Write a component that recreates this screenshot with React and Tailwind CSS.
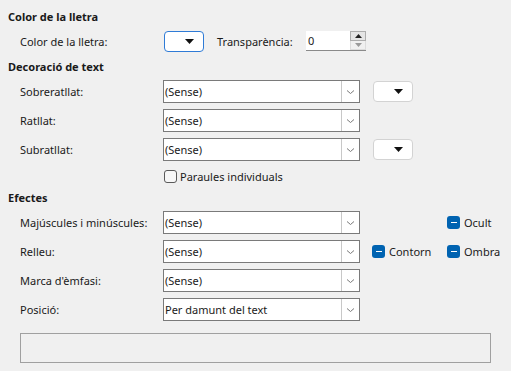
import React from 'react';

const font = { fontFamily: '"Noto Sans", "Open Sans", sans-serif' };

function Select({ value }) {
    return (
        <div className="flex h-[23px] w-[197px] shrink-0 border border-[#7a7a7a] bg-white">
            <div className="flex flex-1 items-center pl-[1px] text-[11px] leading-none text-[#1a1a1a]">{value}</div>
            <div className="flex w-[18px] items-center justify-center border-l border-[#c8c8c8] bg-white">
                <svg width="9" height="6" viewBox="0 0 9 6">
                    <path d="M1 1.5 L4.5 4.5 L8 1.5" fill="none" stroke="#7a7a7a" strokeWidth="1" />
                </svg>
            </div>
        </div>
    );
}

function ColorButton({ active }) {
    return (
        <div
            className={
                'flex h-[21px] w-[40px] shrink-0 items-center justify-end rounded-[4px] border bg-white pr-[9px] ' +
                (active ? 'border-[#2f7bd6]' : 'border-[#d3d3d3]')
            }
        >
            <svg width="9" height="5" viewBox="0 0 9 5">
                <path d="M0 0 H9 L4.5 5 Z" fill="#111" />
            </svg>
        </div>
    );
}

function Check({ label }) {
    return (
        <div className="flex items-center gap-[4px]">
            <div className="flex h-[13px] w-[13px] items-center justify-center rounded-[3px] bg-[#0063b1]">
                <div className="h-[1.5px] w-[6px] bg-white" />
            </div>
            <span className="whitespace-nowrap text-[11px] leading-none text-[#1a1a1a]">{label}</span>
        </div>
    );
}

function Row({ label, children, className = '' }) {
    return (
        <div className={'flex h-[23px] items-center ' + className}>
            <div className="w-[163px] shrink-0 whitespace-nowrap pl-[20px] text-[11px] leading-none text-[#1a1a1a]">
                {label}
            </div>
            {children}
        </div>
    );
}

function Heading({ children, className = '' }) {
    return (
        <div className={'h-4 pl-[8px] text-[11px] font-bold leading-4 text-[#1a1a1a] ' + className}>{children}</div>
    );
}

export default function App() {
    return (
        <div className="h-[371px] w-[511px] overflow-hidden bg-[#f0f0f0] pt-[9px]" style={font}>
            <Heading>Color de la lletra</Heading>

            <div className="mt-[6px] flex h-[20px] items-center">
                <div className="w-[164px] shrink-0 pl-[20px] text-[11px] leading-none text-[#1a1a1a]">Color de la lletra:</div>
                <div className="h-[20px]">
                    <ColorButton active />
                </div>
                <span className="ml-[13px] w-[89px] shrink-0 text-[11px] leading-none text-[#1a1a1a]">Transparència:</span>
                <div className="flex h-[20px] w-[60px] shrink-0 border-b border-[#8a8a8a] bg-white">
                    <div className="flex flex-1 items-center pl-[2px] text-[11px] leading-none text-[#1a1a1a]">0</div>
                    <div className="flex w-[16px] flex-col bg-[#f0f0f0]">
                        <div className="flex h-[10px] items-center justify-center border border-[#adadad] bg-[#e5e5e5]">
                            <svg width="7" height="4" viewBox="0 0 7 4">
                                <path d="M0 4 H7 L3.5 0 Z" fill="#222" />
                            </svg>
                        </div>
                        <div className="flex h-[9px] items-center justify-center border border-t-0 border-[#dcdcdc]">
                            <svg width="7" height="4" viewBox="0 0 7 4">
                                <path d="M0 0 H7 L3.5 4 Z" fill="#9a9a9a" />
                            </svg>
                        </div>
                    </div>
                </div>
            </div>

            <Heading className="mt-[8px]">Decoració de text</Heading>

            <Row label="Sobreratllat:" className="mt-[5px]">
                <Select value="(Sense)" />
                <div className="ml-[13px]">
                    <ColorButton />
                </div>
            </Row>
            <Row label="Ratllat:" className="mt-[6px]">
                <Select value="(Sense)" />
            </Row>
            <Row label="Subratllat:" className="mt-[6px]">
                <Select value="(Sense)" />
                <div className="ml-[13px]">
                    <ColorButton />
                </div>
            </Row>

            <div className="mt-[9px] flex h-[13px] items-center pl-[164px]">
                <div className="h-[13px] w-[13px] shrink-0 rounded-[3px] border border-[#5a5a5a] bg-[#f7f7f7]" />
                <span className="ml-[3px] text-[11px] leading-none text-[#1a1a1a]">Paraules individuals</span>
            </div>

            <Heading className="mt-[7px]">Efectes</Heading>

            <Row label="Majúscules i minúscules:" className="mt-[5px]">
                <Select value="(Sense)" />
                <div className="ml-[87px]">
                    <Check label="Ocult" />
                </div>
            </Row>
            <Row label="Relleu:" className="mt-[6px]">
                <Select value="(Sense)" />
                <div className="ml-[12px] w-[75px]">
                    <Check label="Contorn" />
                </div>
                <Check label="Ombra" />
            </Row>
            <Row label="Marca d'èmfasi:" className="mt-[6px]">
                <Select value="(Sense)" />
            </Row>
            <Row label="Posició:" className="mt-[6px]">
                <Select value="Per damunt del text" />
            </Row>

            <div className="ml-[20px] mt-[12px] h-[30px] w-[471px] border border-[#a0a0a0]" />
        </div>
    );
}
